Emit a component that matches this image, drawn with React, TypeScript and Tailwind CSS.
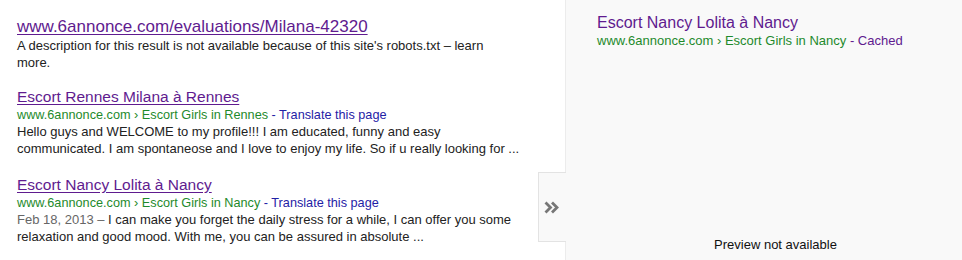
import React from "react";

type Result = {
  title: string;
  titleClass: string;
  crumb?: string;
  date?: string;
  snippet: string;
};

const results: Result[] = [
  {
    title: "www.6annonce.com/evaluations/Milana-42320",
    titleClass: "text-[17px]",
    snippet:
      "A description for this result is not available because of this site's robots.txt – learn more.",
  },
  {
    title: "Escort Rennes Milana à Rennes",
    titleClass: "text-[15.5px]",
    crumb: "Escort Girls in Rennes",
    snippet:
      "Hello guys and WELCOME to my profile!!! I am educated, funny and easy communicated. I am spontaneose and I love to enjoy my life. So if u really looking for ...",
  },
  {
    title: "Escort Nancy Lolita à Nancy",
    titleClass: "text-[15.5px]",
    crumb: "Escort Girls in Nancy",
    date: "Feb 18, 2013",
    snippet:
      "I can make you forget the daily stress for a while, I can offer you some relaxation and good mood. With me, you can be assured in absolute ...",
  },
];

function ResultItem({ r }: { r: Result }) {
  return (
    <div className={`w-[514px] ${r.crumb ? "mb-[18px]" : "mb-[16px]"}`}>
      <a
        className={`block leading-[20px] text-[#5f1b8f] underline underline-offset-[2px] ${r.titleClass}`}
      >
        {r.title}
      </a>
      {r.crumb && (
        <div className="text-[12.7px] leading-[16px] text-[#1e8a2c]">
          www.6annonce.com › {r.crumb}
          <span className="text-[#1f22a6]"> - Translate this page</span>
        </div>
      )}
      <div
        className={`text-[13px] leading-[17px] text-[#222] ${r.crumb ? "" : "max-w-[495px]"}`}
      >
        {r.date && <span className="text-[#666]">{r.date} – </span>}
        {r.snippet}
      </div>
    </div>
  );
}

export default function App() {
  return (
    <div className="flex w-[962px] h-[260px] overflow-hidden bg-white font-['Liberation_Sans',Arial,sans-serif]">
      {/* Results column */}
      <div className="w-[565px] shrink-0 pl-[17px] pt-[17px]">
        {results.map((r) => (
          <ResultItem key={r.title} r={r} />
        ))}
      </div>

      {/* Preview pane */}
      <div className="relative flex-1 flex flex-col bg-[#f9f9f9] border-l border-[#ececec] pl-[31px] pt-[13px]">
        <div className="text-[16px] leading-[20px] text-[#5f1b8f]">
          Escort Nancy Lolita à Nancy
        </div>
        <div className="text-[13px] leading-[16px] text-[#1e8a2c]">
          www.6annonce.com › Escort Girls in Nancy
          <span className="text-[#5f1b8f]"> - Cached</span>
        </div>
        <div className="mt-auto mb-[7px] text-center pr-[8px] text-[13px] leading-[16px] text-[#111]">
          Preview not available
        </div>

        {/* toggle tab */}
        <div className="absolute -left-[28px] top-[172px] w-[28px] h-[70px] flex items-center justify-center bg-[#f9f9f9] border border-r-0 border-[#e3e3e3]">
          <svg width="15" height="13" viewBox="0 0 15 13" className="-ml-[2px]">
            <path
              d="M1.5 1.5 L6.5 6.5 L1.5 11.5 M8 1.5 L13 6.5 L8 11.5"
              fill="none"
              stroke="#777"
              strokeWidth="2.8"
            />
          </svg>
        </div>
      </div>
    </div>
  );
}
